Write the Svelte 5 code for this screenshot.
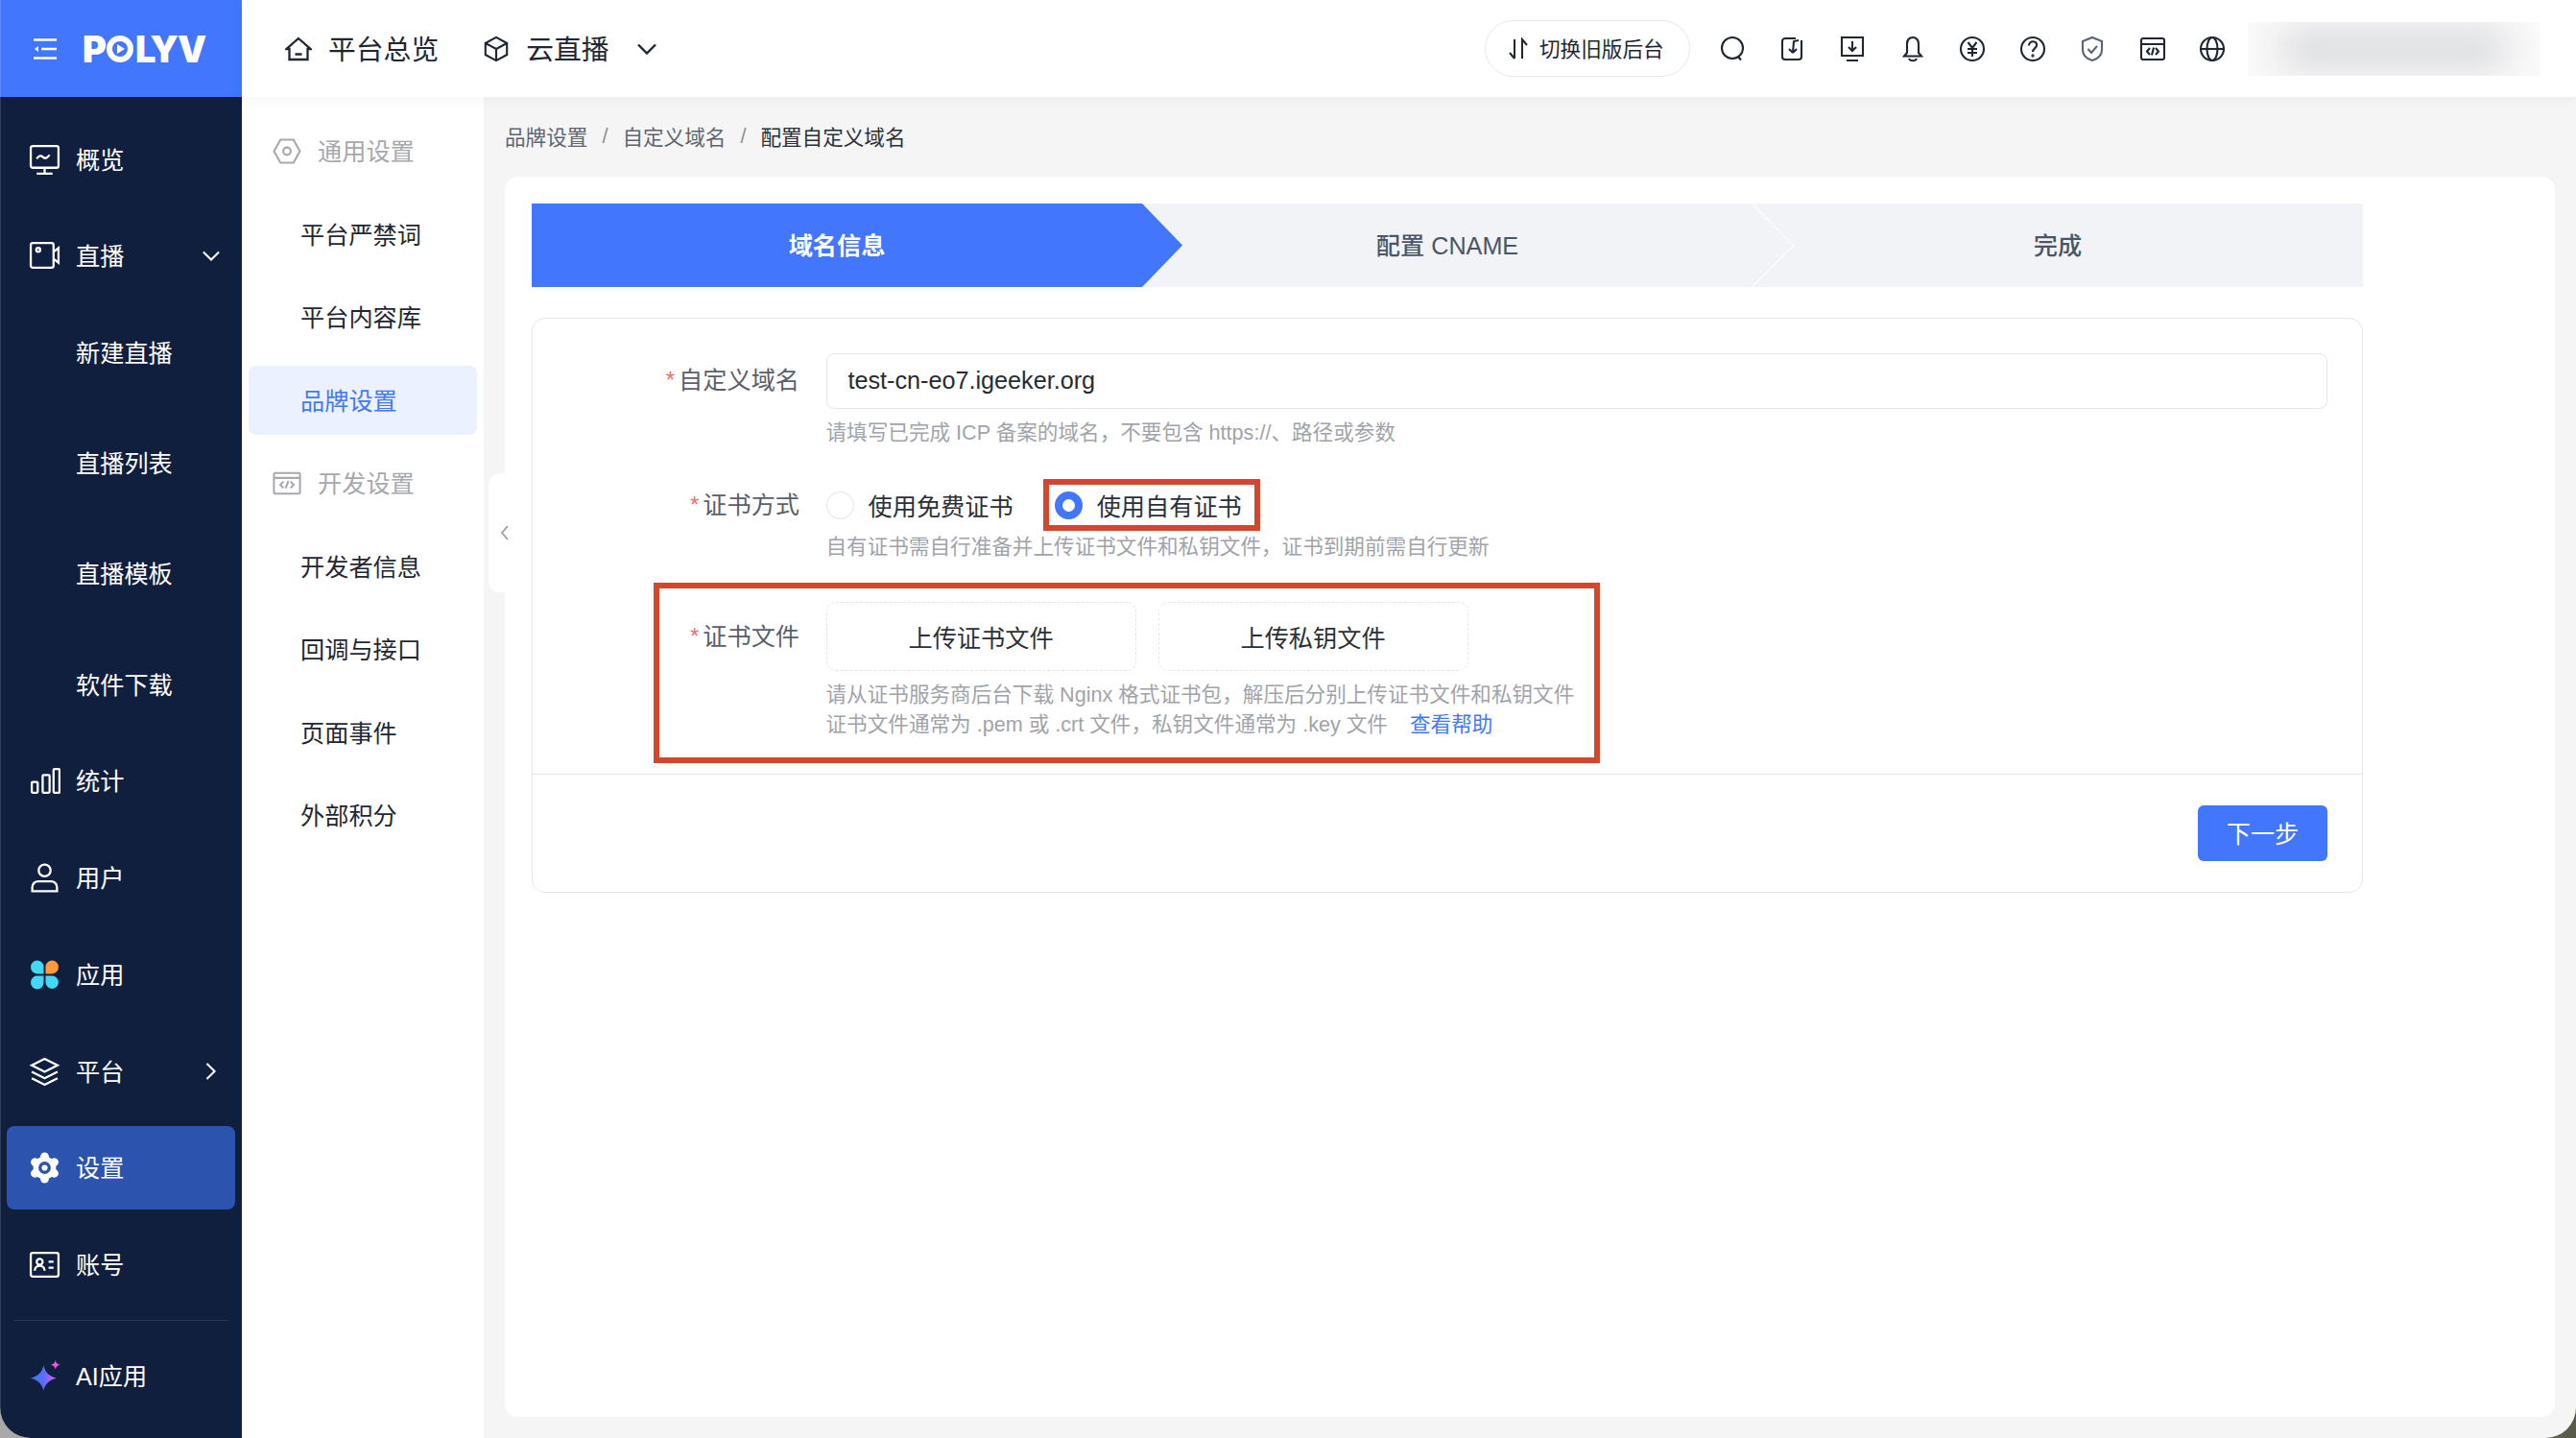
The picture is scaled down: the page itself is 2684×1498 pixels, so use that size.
<script>
	const navIcons = {
		monitor: '<rect x="2" y="2" width="28" height="22" rx="2"/><path d="M16 24v6M8 30h16M8 15c2-3 4-4 6-2s4 2 7-2"/>',
		video: '<rect x="2" y="3" width="23" height="25" rx="2"/><circle cx="9.500" cy="10" r="2"/><path d="M25 12l5-4v15l-5-4"/>',
		bars: '<rect x="3" y="17" width="6" height="11" rx="1"/><rect x="14" y="10" width="7" height="18" rx="1"/><rect x="25" y="4" width="6" height="24" rx="1"/>',
		user: '<circle cx="16" cy="8.500" r="6"/><path d="M3.500 29.500v-4a6 6 0 0 1 6-6h13a6 6 0 0 1 6 6v4z"/>',
		layers: '<path d="M16 3l13 6.500-13 6.500-13-6.500zM3 16l13 6.500L29 16M3 22.500L16 29l13-6.500"/>',
		card: '<rect x="2" y="4" width="28" height="24" rx="2"/><circle cx="11" cy="13" r="3"/><path d="M6 22c0-3 2-5 5-5s5 2 5 5M20 13h5M20 19h5"/>'
	};

	const mainNav = [
		{ label: '概览', icon: 'monitor' },
		{ label: '直播', icon: 'video', arrow: 'down', children: ['新建直播', '直播列表', '直播模板', '软件下载'] },
		{ label: '统计', icon: 'bars' },
		{ label: '用户', icon: 'user' },
		{ label: '应用', icon: 'apps' },
		{ label: '平台', icon: 'layers', arrow: 'right' },
		{ label: '设置', icon: 'gear', active: true },
		{ label: '账号', icon: 'card' }
	];

	const subNav = [
		{ label: '通用设置', group: 'hex' },
		{ label: '平台严禁词' },
		{ label: '平台内容库' },
		{ label: '品牌设置', active: true },
		{ label: '开发设置', group: 'code' },
		{ label: '开发者信息' },
		{ label: '回调与接口' },
		{ label: '页面事件' },
		{ label: '外部积分' }
	];

	const toolIcons = [
		'<circle cx="14" cy="13" r="11"/><path d="M20 22l3 3.500"/>',
		'<path d="M17 3H6a3 3 0 0 0-3 3v16a3 3 0 0 0 3 3h14a3 3 0 0 0 3-3V5M20 5l-5 1-1 12M14 18l-4-4M14 18l4-4"/>',
		'<path d="M3 2h22v19H3zM14 6v10M10 12l4 4 4-4M8 26h12"/>',
		'<path d="M14 2c-4 0-6 3-6 7v9l-3 3.500h18L20 18V9c0-4-2-7-6-7zM10 24c1 3 7 3 8 0"/>',
		'<circle cx="14" cy="14" r="12"/><path d="M9.500 7l4.500 6 4.500-6M9 14h10M9 18h10M14 13v9"/>',
		'<circle cx="14" cy="14" r="12"/><path d="M10 10.500c0-6 9-5.500 8 0-.5 3-4 3-4 6.500"/><circle cx="14" cy="21" r=".6"/>',
		'<path class="muted" d="M14 2l10 4v9c0 6-5 9.500-10 11C9 24.500 4 21 4 15V6zM9.500 14l3.500 4 6-7"/>',
		'<rect x="2" y="3" width="24" height="22" rx="2"/><path d="M2 9h24M11 13l-3 3.500 3 3.500M17 13l3 3.500-3 3.500M15 12.500l-2 8"/>',
		'<circle cx="14" cy="14" r="12"/><ellipse cx="14" cy="14" rx="5.500" ry="12"/><path d="M2 14h24"/>'
	];
</script>

<div class="app">
	<aside class="sidebar">
		<div class="brand">
			<svg class="menu-icon" viewBox="0 0 24 22">
				<path d="M0 1.500h24M8 11h16M0 20.500h24" />
				<path class="arrow-fill" d="M5 8v6l-4-3z" />
			</svg>
			<div class="logo">
				<span>P</span>
				<svg viewBox="0 0 30 30" class="logo-o">
					<circle cx="15" cy="15" r="14" fill="#fff" />
					<circle cx="15" cy="15" r="8" fill="#4277fd" />
					<path d="M12 10l8 5-8 5z" fill="#fff" />
				</svg>
				<span>LYV</span>
			</div>
		</div>

		<nav class="nav">
			{#each mainNav as item}
				<div class="nav-item" class:active={item.active}>
					{#if item.icon === 'apps'}
						<svg class="nav-icon" viewBox="0 0 32 32">
							<path fill="#42d9f7" d="M2 8a6.500 6.500 0 0 1 13 0v7H8.500A6.500 6.500 0 0 1 2 8z" />
							<path fill="#ff9a3c" d="M17 8a6.500 6.500 0 0 1 13 0 6.500 6.500 0 0 1-6.500 7H17z" />
							<path fill="#42d9f7" d="M2 24a6.500 6.500 0 0 1 6.500-7H15v7a6.500 6.500 0 0 1-13 0z" />
							<path fill="#42d9f7" d="M17 17h6.500a6.500 6.500 0 1 1-6.500 7z" />
						</svg>
					{:else if item.icon === 'gear'}
						<svg class="nav-icon" viewBox="0 0 32 32">
							<g fill="#fff">
								<circle cx="16" cy="16" r="11.500" />
								{#each [0, 60, 120, 180, 240, 300] as a}
									<circle cx="16" cy="4.800" r="4.300" transform="rotate({a} 16 16)" />
								{/each}
							</g>
							<circle cx="16" cy="16" r="6.200" fill="#2c54ae" />
							<circle cx="16" cy="16" r="3" fill="#fff" />
						</svg>
					{:else}
						<svg class="nav-icon stroke" viewBox="0 0 32 32">{@html navIcons[item.icon]}</svg>
					{/if}
					<span>{item.label}</span>
					{#if item.arrow === 'down'}
						<svg class="nav-arrow" viewBox="0 0 20 20"><path d="M1 5l9 9 9-9" /></svg>
					{:else if item.arrow === 'right'}
						<svg class="nav-arrow" viewBox="0 0 20 20"><path d="M5 1l9 9-9 9" /></svg>
					{/if}
				</div>
				{#if item.children}
					<div class="nav-children">
						{#each item.children as child}
							<div class="nav-child">{child}</div>
						{/each}
					</div>
				{/if}
			{/each}
		</nav>

		<div class="nav-divider"></div>
		<div class="nav-item ai">
			<svg class="nav-icon spark" viewBox="0 0 32 32">
				<defs>
					<linearGradient id="spark" x1="0" y1="0" x2="1" y2="0">
						<stop offset="0" stop-color="#2f7bff" />
						<stop offset="0.5" stop-color="#5a6cff" />
						<stop offset="1" stop-color="#e05cf0" />
					</linearGradient>
				</defs>
				<path fill="url(#spark)" d="M13 5c1.500 7 5 10.500 13 13-8 2.500-11.500 6-13 13-1.500-7-5-10.500-13-13 8-2.500 11.500-6 13-13z" />
				<path fill="#e85cd8" d="M25 0c.6 3 2 4 5 4.500-3 .6-4.400 2-5 4.500-.6-2.500-2-3.900-5-4.500 3-.5 4.400-1.500 5-4.500z" />
			</svg>
			<span>AI应用</span>
		</div>
	</aside>

	<div class="right">
		<header class="topbar">
			<div class="top-link home">
				<svg viewBox="0 0 28 26" class="top-icon">
					<path d="M14 2L26.500 13H23.500V24H4.500V13H1.500zM10.500 18.500h7" />
				</svg>
				<span>平台总览</span>
			</div>
			<div class="top-link cube">
				<svg viewBox="0 0 28 30" class="top-icon">
					<path d="M14 2l12 6.500v13L14 28 2 21.500v-13zM2 8.500L14 15l12-6.500M14 15v13" />
				</svg>
				<span>云直播</span>
				<svg viewBox="0 0 20 12" class="top-chevron"><path d="M1 1.500l9 9 9-9" /></svg>
			</div>
			<div class="top-spacer"></div>
			<div class="switch-pill">
				<svg viewBox="0 0 20 24"><path d="M6 2v20M1 16l5 6M14 22V2l5 6" /></svg>
				<span>切换旧版后台</span>
			</div>
			<div class="tools">
				{#each toolIcons as icon}
					<svg viewBox="0 0 28 28" class="tool">{@html icon}</svg>
				{/each}
			</div>
			<div class="account-blur"></div>
		</header>

		<div class="body">
			<aside class="subnav">
				{#each subNav as item}
					{#if item.group}
						<div class="sub-group">
							{#if item.group === 'hex'}
								<svg viewBox="0 0 30 28"><path d="M8 1.500h14L29 14l-7 12.500H8L1 14z" /><circle cx="15" cy="14" r="4" /></svg>
							{:else}
								<svg viewBox="0 0 32 26"><rect x="1.500" y="1.500" width="29" height="23" rx="1.500" /><path d="M1.500 7h29M12 11l-3.500 3.500L12 18M20 11l3.500 3.500L20 18M17.500 10.500l-3 8" /></svg>
							{/if}
							<span>{item.label}</span>
						</div>
					{:else}
						<div class="sub-item" class:active={item.active}>{item.label}</div>
					{/if}
				{/each}
			</aside>

			<main class="content">
				<div class="collapse">
					<svg viewBox="0 0 10 16"><path d="M8 1L2 8l6 7" /></svg>
				</div>

				<div class="breadcrumb">
					<span>品牌设置</span>
					<i>/</i>
					<span>自定义域名</span>
					<i>/</i>
					<span class="current">配置自定义域名</span>
				</div>

				<section class="card">
					<div class="steps">
						<div class="step active">域名信息</div>
						<div class="step">配置 CNAME</div>
						<div class="step">完成</div>
					</div>

					<div class="panel">
						<div class="form">
							<div class="row">
								<div class="label tall"><em>*</em>自定义域名</div>
								<div class="field">
									<div class="input">test-cn-eo7.igeeker.org</div>
									<div class="hint">请填写已完成 ICP 备案的域名，不要包含 https://、路径或参数</div>
								</div>
							</div>

							<div class="row">
								<div class="label radio-label"><em>*</em>证书方式</div>
								<div class="field">
									<div class="radios">
										<div class="radio">
											<span class="dot"></span>使用免费证书
										</div>
										<div class="radio checked">
											<span class="dot"></span>使用自有证书
											<div class="mark"></div>
										</div>
									</div>
									<div class="hint">自有证书需自行准备并上传证书文件和私钥文件，证书到期前需自行更新</div>
								</div>
							</div>

							<div class="row files">
								<div class="mark"></div>
								<div class="label file-label"><em>*</em>证书文件</div>
								<div class="field">
									<div class="uploads">
										<div class="upload">上传证书文件</div>
										<div class="upload">上传私钥文件</div>
									</div>
									<div class="hint">请从证书服务商后台下载 Nginx 格式证书包，解压后分别上传证书文件和私钥文件</div>
									<div class="hint">证书文件通常为 .pem 或 .crt 文件，私钥文件通常为 .key 文件<a href="#help">查看帮助</a></div>
								</div>
							</div>
						</div>

						<div class="panel-foot">
							<button type="button" class="next">下一步</button>
						</div>
					</div>
				</section>
			</main>
		</div>
	</div>
</div>

<style>
	:global(body) {
		margin: 0;
		background: linear-gradient(to right, #a9a9a9 93%, #565a44);
	}

	.app {
		display: flex;
		width: 2684px;
		height: 1498px;
		overflow: hidden;
		border-radius: 0 0 32px 32px;
		background: #f5f5f5;
		font-family: 'Liberation Sans', 'Noto Sans CJK SC', sans-serif;
		color: #1f2733;
	}

	.sidebar {
		flex: 0 0 252px;
		display: flex;
		flex-direction: column;
		background: #111f3f;
		color: #fff;
		box-shadow: inset 1px 0 0 rgba(255, 255, 255, 0.14);
	}

	.brand {
		height: 101px;
		flex: none;
		display: flex;
		align-items: center;
		background: #4277fd;
		padding-left: 35px;
		box-sizing: border-box;
		box-shadow: inset 1px 0 0 rgba(255, 255, 255, 0.14);
	}

	.menu-icon {
		width: 24px;
		height: 22px;
		fill: none;
		stroke: #fff;
		stroke-width: 2.400;
	}

	.arrow-fill {
		fill: #fff;
		stroke: none;
	}

	.logo {
		display: flex;
		align-items: center;
		margin-left: 27px;
		font-family: Inter, sans-serif;
		font-size: 38px;
		font-weight: 900;
		line-height: 1;
		letter-spacing: -1px;
	}

	.logo-o {
		width: 30px;
		height: 30px;
		margin: 0 1px 0 0;
	}

	.nav {
		padding-top: 21.500px;
		display: flex;
		flex-direction: column;
		gap: 13.700px;
	}

	.nav-item {
		position: relative;
		display: flex;
		align-items: center;
		height: 87px;
		flex: none;
		margin: 0 7px;
		padding-left: 23px;
		border-radius: 8px;
		font-size: 25.200px;
	}

	.nav-item span {
		padding-bottom: 3px;
	}

	.nav-item.active {
		background: #2c54ae;
	}

	.nav-item.ai {
		margin-top: 14px;
	}

	.nav-icon {
		width: 33px;
		height: 33px;
		flex: none;
		margin-right: 16px;
	}

	.nav-icon.spark {
		margin-left: 2px;
		margin-right: 14px;
	}

	.stroke {
		fill: none;
		stroke: #fff;
		stroke-width: 2.200;
	}

	.nav-arrow {
		position: absolute;
		left: 204px;
		width: 18px;
		height: 18px;
		fill: none;
		stroke: #fff;
		stroke-width: 2.300;
	}

	.nav-children {
		display: flex;
		flex-direction: column;
		gap: 28.300px;
	}

	.nav-child {
		height: 87px;
		box-sizing: border-box;
		display: flex;
		align-items: center;
		padding: 0 0 3px 79px;
		font-size: 25.200px;
	}

	.nav-divider {
		height: 1px;
		flex: none;
		margin: 14px 14px 0;
		background: #2a3753;
	}

	.right {
		flex: 1;
		min-width: 0;
		display: flex;
		flex-direction: column;
	}

	.topbar {
		position: relative;
		z-index: 2;
		height: 101px;
		flex: none;
		display: flex;
		align-items: center;
		background: #fff;
		box-shadow: 0 2px 14px rgba(0, 0, 0, 0.05);
		padding-left: 45px;
	}

	.top-link {
		display: flex;
		align-items: center;
		font-size: 28.800px;
	}

	.top-link span {
		padding-bottom: 2px;
	}

	.top-icon {
		width: 28px;
		height: 28px;
		margin-right: 17px;
		fill: none;
		stroke: #1f2733;
		stroke-width: 2.300;
	}

	.top-link.cube {
		margin-left: 46px;
	}

	.top-chevron {
		width: 20px;
		height: 12px;
		margin-left: 29px;
		fill: none;
		stroke: #1f2733;
		stroke-width: 2.400;
	}

	.top-spacer {
		flex: 1;
	}

	.switch-pill {
		display: flex;
		align-items: center;
		gap: 12px;
		height: 59px;
		width: 214px;
		box-sizing: border-box;
		padding-left: 24px;
		border: 1.500px solid #e7e8ea;
		border-radius: 30px;
		font-size: 21.600px;
	}

	.switch-pill span {
		padding-bottom: 2px;
	}

	.switch-pill svg {
		width: 20px;
		height: 24px;
		fill: none;
		stroke: #1f2733;
		stroke-width: 2;
	}

	.tools {
		display: flex;
		gap: 34.500px;
		margin-left: 30px;
	}

	.tool {
		width: 28px;
		height: 28px;
		fill: none;
		stroke: #1f2733;
		stroke-width: 2.100;
	}

	.tool :global(.muted) {
		stroke: #5b6472;
	}

	.account-blur {
		position: relative;
		overflow: hidden;
		width: 304px;
		height: 56px;
		margin: 0 38px 0 23px;
		background: #fafafa;
	}

	.account-blur::after {
		content: '';
		position: absolute;
		inset: 8px 34px;
		background: #d8d9dc;
		filter: blur(20px);
	}

	.body {
		flex: 1;
		min-height: 0;
		display: flex;
	}

	.subnav {
		flex: 0 0 252px;
		box-sizing: border-box;
		display: flex;
		flex-direction: column;
		gap: 14.500px;
		padding: 20px 7px 0;
		background: #fff;
	}

	.sub-group,
	.sub-item {
		height: 72px;
		flex: none;
		box-sizing: border-box;
		display: flex;
		align-items: center;
		font-size: 25.200px;
		border-radius: 8px;
	}

	.sub-group {
		padding-left: 25px;
		color: #a6a9ad;
		gap: 17px;
	}

	.sub-group span {
		padding-bottom: 2px;
	}

	.sub-group svg {
		width: 30px;
		height: 27px;
		flex: none;
		fill: none;
		stroke: #a6a9ad;
		stroke-width: 2.200;
	}

	.sub-item {
		padding: 0 0 2px 54px;
	}

	.sub-item.active {
		background: #ebf1fe;
		color: #4277fd;
	}

	.content {
		position: relative;
		flex: 1;
		min-width: 0;
		padding: 0 22px 22px;
		display: flex;
		flex-direction: column;
	}

	.collapse {
		position: absolute;
		left: 5px;
		top: 392px;
		width: 33px;
		height: 124px;
		display: flex;
		align-items: center;
		justify-content: center;
		background: #fff;
		border-radius: 12px;
	}

	.collapse svg {
		width: 10px;
		height: 16px;
		fill: none;
		stroke: #9aa0a8;
		stroke-width: 1.800;
	}

	.breadcrumb {
		display: flex;
		align-items: center;
		height: 83px;
		box-sizing: border-box;
		padding-bottom: 2px;
		flex: none;
		font-size: 21.600px;
		color: #5f6570;
	}

	.breadcrumb i {
		font-style: normal;
		margin: 0 15px;
		color: #8b9099;
	}

	.breadcrumb .current {
		color: #2b3038;
	}

	.card {
		flex: 1;
		background: #fff;
		border-radius: 14px;
		padding: 28px;
	}

	.steps {
		display: flex;
		width: 1908px;
		height: 87px;
		background: #f1f3f6;
	}

	.step {
		position: relative;
		flex: 1;
		box-sizing: border-box;
		padding-bottom: 3px;
		display: flex;
		align-items: center;
		justify-content: center;
		font-size: 25.200px;
		font-weight: 500;
		color: #4b5565;
	}

	.step::after {
		content: '';
		position: absolute;
		z-index: 1;
		top: 0;
		left: 100%;
		width: 42px;
		height: 100%;
		clip-path: polygon(0 0, 100% 50%, 0 100%);
		background: #f1f3f6;
	}

	.step:nth-child(2)::before {
		content: '';
		position: absolute;
		top: 0;
		left: 100%;
		width: 43.500px;
		height: 100%;
		clip-path: polygon(0 0, 100% 50%, 0 100%, 0 98%, 97% 50%, 0 2%);
		background: #fff;
		z-index: 2;
	}

	.step:last-child::after {
		display: none;
	}

	.step.active {
		background: #4277fd;
		color: #fff;
		font-weight: 700;
	}

	.step.active::after {
		background: #4277fd;
	}

	.panel {
		width: 1908px;
		box-sizing: border-box;
		height: 599px;
		margin-top: 32px;
		border: 1.500px solid #e5e7eb;
		border-radius: 14px;
		display: flex;
		flex-direction: column;
	}

	.form {
		flex: 1;
		padding: 35.500px 36px 0 0;
		border-bottom: 1.500px solid #e5e7eb;
		display: flex;
		flex-direction: column;
	}

	.row {
		position: relative;
		display: flex;
		gap: 27.500px;
	}

	.row.files {
		margin-top: 18.500px;
	}

	.label {
		flex: 0 0 278px;
		text-align: right;
		font-size: 25.200px;
		color: #59606b;
		line-height: 36px;
	}

	.label em {
		font-style: normal;
		color: #f56c6c;
		font-size: 24px;
		margin-right: 4px;
		vertical-align: 1px;
	}

	.label.tall {
		padding-top: 10px;
	}

	.label.radio-label {
		padding-top: 9px;
	}

	.label.file-label {
		padding-top: 40px;
	}

	.field {
		flex: 1;
		min-width: 0;
	}

	.input {
		height: 58px;
		box-sizing: border-box;
		display: flex;
		align-items: center;
		padding-left: 22px;
		border: 1.500px solid #e5e7eb;
		border-radius: 8px;
		font-size: 25.200px;
		color: #272c33;
	}

	.hint {
		font-size: 21.600px;
		line-height: 32px;
		color: #a0a4aa;
		white-space: nowrap;
	}

	.input + .hint {
		margin-top: 9px;
		margin-bottom: 32px;
	}

	.radios {
		display: flex;
		height: 55.500px;
		align-items: center;
		gap: 43px;
	}

	.radio {
		position: relative;
		display: flex;
		align-items: center;
		gap: 15px;
		font-size: 25.200px;
		color: #2b3038;
	}

	.dot {
		width: 29px;
		height: 29px;
		box-sizing: border-box;
		border: 1.500px solid #e2e4e7;
		border-radius: 50%;
		background: #fff;
	}

	.checked .dot {
		border: 8px solid #4277fd;
	}

	.uploads {
		display: flex;
		gap: 23px;
		margin: 22px 0 9px;
	}

	.upload {
		width: 323px;
		height: 72px;
		box-sizing: border-box;
		display: flex;
		align-items: center;
		justify-content: center;
		border: 1.500px dashed #e3e5e8;
		border-radius: 10px;
		font-size: 25.200px;
		color: #2b3038;
	}

	.hint + .hint {
		margin-top: -1px;
	}

	a {
		margin-left: 23px;
		color: #4277fd;
		text-decoration: none;
	}

	.mark {
		position: absolute;
		border: 6px solid #d4472c;
		pointer-events: none;
	}

	.radio .mark {
		left: -12px;
		top: -9px;
		width: 226px;
		height: 54px;
		box-sizing: border-box;
	}

	.files .mark {
		left: 680px;
		top: 2px;
		width: 986px;
		height: 188px;
		box-sizing: border-box;
		margin-left: -554px;
	}

	.panel-foot {
		flex: none;
		display: flex;
		justify-content: flex-end;
		padding: 32px 36px 32px 0;
	}

	.next {
		width: 135px;
		height: 58px;
		border: 0;
		border-radius: 6px;
		background: #4277fd;
		color: #fff;
		font: inherit;
		font-size: 25.200px;
		padding-bottom: 3px;
	}
</style>
